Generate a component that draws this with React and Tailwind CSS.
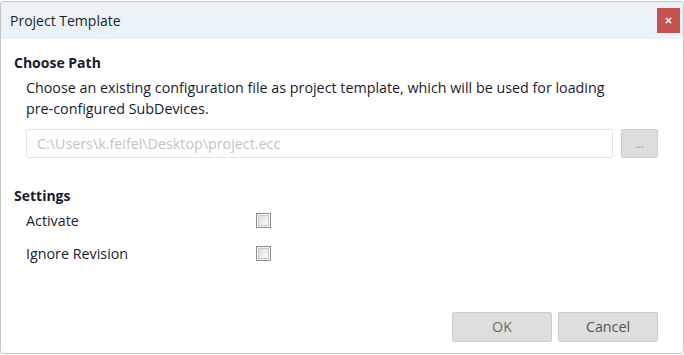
import { X } from "lucide-react";

function Checkbox() {
  return (
    <div className="w-[15px] h-[15px] border border-[#8e8e8e] bg-[#f4f4f4] p-[1px]">
      <div className="w-full h-full border border-[#c9c9c9] bg-gradient-to-br from-[#dcdcdc] to-[#fafafa]" />
    </div>
  );
}

function SettingRow({ label }) {
  return (
    <div className="flex items-center h-[33px]">
      <span className="w-[230px]">{label}</span>
      <Checkbox />
    </div>
  );
}

export default function App() {
  return (
    <div
      className="w-[684px] h-[355px] bg-white pt-[1px] text-[#1b1b2f]"
      style={{ fontFamily: '"Open Sans", "Noto Sans", sans-serif' }}
    >
      <div className="h-[353px] flex flex-col border border-[#c6c6c6] rounded-[3px] overflow-hidden">
        <div className="h-[37px] shrink-0 flex items-center justify-between bg-[#ebf3f8] pl-[9px] pr-[3px]">
          <span className="text-[14px] text-[#1e1e1e]">Project Template</span>
          <button
            type="button"
            className="w-[23px] h-[25px] bg-[#c75050] flex items-center justify-center"
          >
            <X size={9} strokeWidth={4} className="text-white" />
          </button>
        </div>

        <div className="flex-1 flex flex-col pl-[13px] pr-[25px] pt-[14px] pb-[11px] text-[14.3px]">
          <h2 className="font-bold leading-[20px] text-[14px]">Choose Path</h2>
          <p className="mt-[4px] pl-[12px] leading-[21px]">
            Choose an existing configuration file as project template, which will be used for loading
            <br />
            pre-configured SubDevices.
          </p>
          <div className="mt-[10px] pl-[12px] flex gap-[8px]">
            <div className="flex-1 h-[29px] border border-[#e3e3e3] rounded-[2px] flex items-center px-[10px] text-[#c3c3c3]">
              C:\Users\k.feifel\Desktop\project.ecc
            </div>
            <button
              type="button"
              className="w-[37px] h-[29px] bg-[#dddddd] border border-[#cfcfcf] rounded-[2px] text-[#888] text-[10px] leading-none"
            >
              ...
            </button>
          </div>

          <h2 className="mt-[28px] font-bold leading-[20px] text-[14px]">Settings</h2>
          <div className="pl-[12px] -mt-[2px]">
            <SettingRow label="Activate" />
            <SettingRow label="Ignore Revision" />
          </div>

          <div className="mt-auto flex justify-end gap-[6px]">
            <button
              type="button"
              className="w-[100px] h-[30px] bg-[#dedede] border border-[#cecece] rounded-[2px] text-[#6a6a6a]"
            >
              OK
            </button>
            <button
              type="button"
              className="w-[100px] h-[30px] bg-[#dedede] border border-[#cecece] rounded-[2px] text-[#555]"
            >
              Cancel
            </button>
          </div>
        </div>
      </div>
    </div>
  );
}
